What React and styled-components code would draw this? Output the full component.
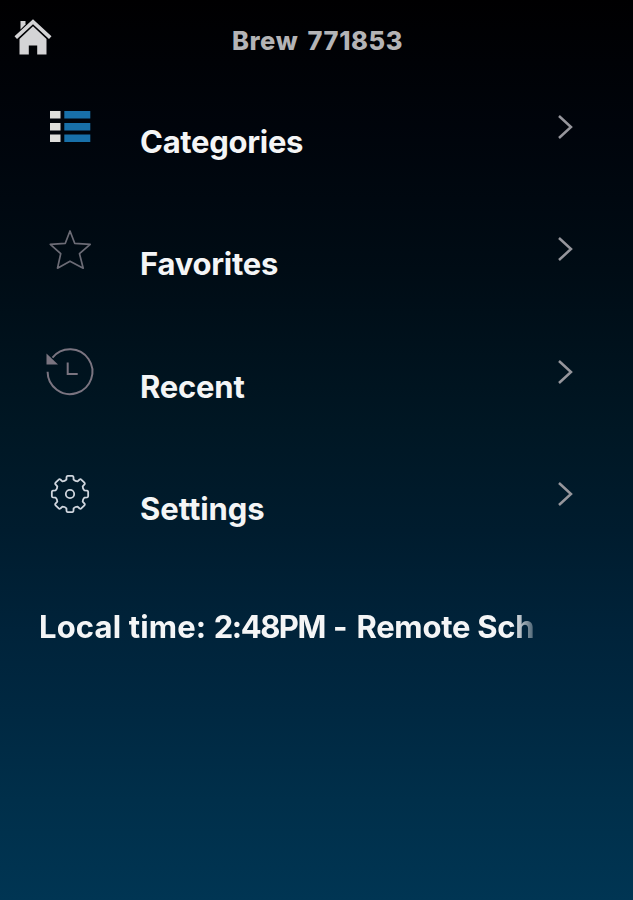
import styled, { createGlobalStyle } from 'styled-components';

const menuItems = [
  { label: 'Categories', icon: CategoriesIcon, spacing: -0.3 },
  { label: 'Favorites', icon: FavoritesIcon, spacing: -0.25 },
  { label: 'Recent', icon: RecentIcon, spacing: -0.2 },
  { label: 'Settings', icon: SettingsIcon, spacing: -0.05 },
];

function HomeIcon() {
  return (
    <svg width="40" height="40" viewBox="0 0 40 40" fill="#d4d4d6">
      <path d="M7.500 3h5v3.500l-5 5z" />
      <path d="M20 1.200L38.500 18.300l-2.500 2.700L20 6.300 4 21l-2.500-2.700z" />
      <path d="M20 8.300l13.500 12.700V36.500h-9.300v-9h-8.400v9H6.500V21z" />
    </svg>
  );
}

function CategoriesIcon() {
  return (
    <svg width="60" height="60" viewBox="0 0 60 60">
      {[14, 26, 37.500].map((y) => (
        <g key={y}>
          <rect x="10" y={y} width="10.500" height="7.500" fill="#dededc" />
          <rect x="24.300" y={y} width="26" height="7.500" fill="#1870a9" />
        </g>
      ))}
    </svg>
  );
}

function FavoritesIcon() {
  return (
    <svg width="60" height="60" viewBox="0 0 60 60" fill="none" stroke="#6b6b75" strokeWidth="1.700" strokeLinejoin="round">
      <path d="M30 12l4.700 12.300 15.500 1-10.700 9.400 3.700 14.500L30 42.200l-12.500 7 3.200-14.500L10.300 25.300l15-1z" />
    </svg>
  );
}

function RecentIcon() {
  return (
    <svg width="60" height="60" viewBox="0 0 60 60" fill="none" stroke="#7a7480" strokeWidth="2">
      <path d="M7.600 29.800A22.400 22.400 0 1 0 12.500 15.700" />
      <path d="M6.500 11.500v11h11.500z" fill="#7a7480" stroke="none" />
      <path d="M27.700 20.500V32h10" />
    </svg>
  );
}

function SettingsIcon() {
  return (
    <svg width="60" height="60" viewBox="0 0 60 60" fill="none" stroke="#d0d6de" strokeWidth="1.800" strokeLinejoin="round">
      <path d={gearPath(30, 30)} />
      <circle cx="30" cy="30" r="4.200" />
    </svg>
  );
}

// eight teeth with softly rounded valleys between them
function gearPath(cx, cy) {
  const point = (r, deg) => {
    const a = (deg * Math.PI) / 180;
    return `${(cx + r * Math.sin(a)).toFixed(2)} ${(cy - r * Math.cos(a)).toFixed(2)}`;
  };
  let d = '';
  for (let i = 0; i < 8; i++) {
    const a = i * 45;
    d += `${i ? 'L' : 'M'}${point(14.800, a - 14)}L${point(17.400, a - 11.500)}`;
    d += `Q${point(18.500, a - 10)} ${point(18.300, a - 7)}`;
    d += `L${point(18.300, a + 7)}Q${point(18.500, a + 10)} ${point(17.400, a + 11.500)}`;
    d += `L${point(14.800, a + 14)}Q${point(13.700, a + 22.500)} ${point(14.800, a + 31)}`;
  }
  return d + 'Z';
}

function Chevron() {
  return (
    <svg width="20" height="30" viewBox="0 0 20 30" fill="none" stroke="#96969c" strokeWidth="2.500">
      <path d="M4 4l12 11L4 26" />
    </svg>
  );
}

function App() {
  return (
    <Screen>
      <GlobalStyle />
      <Header>
        <HomeButton aria-label="Home">
          <HomeIcon />
        </HomeButton>
        <Title>Brew 771853</Title>
      </Header>
      <Menu>
        {menuItems.map(({ label, icon: Icon, spacing }) => (
          <MenuRow key={label}>
            <IconBox>
              <Icon />
            </IconBox>
            <Label $spacing={spacing}>{label}</Label>
            <Chevron />
          </MenuRow>
        ))}
      </Menu>
      <Ticker>
        <TickerPart $spacing={0.15}>Local time: </TickerPart>
        <TickerPart $spacing={-1.5}>2:48PM</TickerPart>
        <TickerPart $spacing={0.8}> - </TickerPart>
        <TickerPart $spacing={-0.25}>Remote Sch</TickerPart>
      </Ticker>
    </Screen>
  );
}

const GlobalStyle = createGlobalStyle`
  body {
    margin: 0;
    background: #000;
  }
`;

const Screen = styled.div`
  box-sizing: border-box;
  width: 633px;
  height: 900px;
  overflow: hidden;
  font-family: Inter, 'Liberation Sans', sans-serif;
  font-weight: 700;
  color: #f4f5f6;
  background: linear-gradient(
    #000001 0px,
    #00040b 125px,
    #000c15 270px,
    #001724 430px,
    #001c2e 530px,
    #00233a 630px,
    #002841 710px,
    #002f4a 800px,
    #003553 900px
  );
`;

const Header = styled.header`
  display: grid;
  grid-template-columns: 60px 1fr 60px;
  align-items: center;
  height: 80px;
`;

const HomeButton = styled.button`
  display: flex;
  padding: 0;
  margin: 0 0 6px 13px;
  border: none;
  background: none;
`;

const Title = styled.h1`
  margin: 0;
  padding-left: 2px;
  font-size: 25.500px;
  font-weight: 800;
  line-height: 81px;
  letter-spacing: 0.6px;
  word-spacing: 3px;
  text-align: center;
  color: #b4b4b6;
`;

const Menu = styled.nav`
  display: flex;
  flex-direction: column;
  padding: 17px 58px 0 40px;
`;

const MenuRow = styled.div`
  display: grid;
  grid-template-columns: 100px 1fr 20px;
  align-items: start;
  height: 122.400px;

  > svg {
    margin-top: 15px;
  }
`;

const IconBox = styled.div`
  width: 60px;
  height: 60px;
`;

const Label = styled.span`
  padding-top: 25px;
  font-size: 31px;
  line-height: 40px;
  letter-spacing: ${(props) => props.$spacing}px;
`;

const Ticker = styled.p`
  width: 510px;
  margin: 20px 0 0 39px;
  white-space: pre;
  font-size: 31px;
  line-height: 40px;
  mask-image: linear-gradient(to right, #000 474px, transparent 504px);
`;

const TickerPart = styled.span`
  letter-spacing: ${(props) => props.$spacing}px;
`;

export default App;
